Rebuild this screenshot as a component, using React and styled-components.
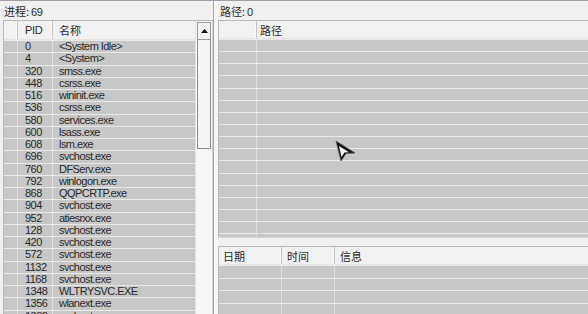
import React from 'react'
import styled, { createGlobalStyle } from 'styled-components'

const processes = [
  ['0', '<System Idle>'],
  ['4', '<System>'],
  ['320', 'smss.exe'],
  ['448', 'csrss.exe'],
  ['516', 'wininit.exe'],
  ['536', 'csrss.exe'],
  ['580', 'services.exe'],
  ['600', 'lsass.exe'],
  ['608', 'lsm.exe'],
  ['696', 'svchost.exe'],
  ['760', 'DFServ.exe'],
  ['792', 'winlogon.exe'],
  ['868', 'QQPCRTP.exe'],
  ['904', 'svchost.exe'],
  ['952', 'atiesrxx.exe'],
  ['128', 'svchost.exe'],
  ['420', 'svchost.exe'],
  ['572', 'svchost.exe'],
  ['1132', 'svchost.exe'],
  ['1168', 'svchost.exe'],
  ['1348', 'WLTRYSVC.EXE'],
  ['1356', 'wlanext.exe'],
  ['1388', 'svchost.exe'],
]

const GlobalStyle = createGlobalStyle`
  html, body {
    margin: 0;
    padding: 0;
    background: #f0f0f0;
  }
  body {
    font-family: "Liberation Sans", "Noto Sans CJK SC", sans-serif;
    font-size: 11px;
    letter-spacing: -0.55px;
    color: #2a2a2a;
  }
`

const Window = styled.div`
  position: relative;
  width: 588px;
  height: 314px;
  overflow: hidden;
  border-top: 1px solid #a4a0a8;
  box-sizing: border-box;
  display: flex;
  background: #f0f0f0;
`

const LeftPane = styled.div`
  width: 210px;
  padding-left: 3px;
  display: flex;
  flex-direction: column;
`

const Splitter = styled.div`
  width: 4px;
  border-left: 1px solid #a8a8a8;
  background: #f6f6f6;
`

const RightPane = styled.div`
  flex: 1;
  display: flex;
  flex-direction: column;
  min-width: 0;
`

const Caption = styled.div`
  height: 19px;
  line-height: 20px;
  padding-left: ${p => p.$indent || 1}px;
  font-family: "Noto Sans CJK SC", "Liberation Sans", sans-serif;
  font-size: 11px;
  letter-spacing: 0;
  white-space: nowrap;
`

const Count = styled.span`
  font-family: "Liberation Sans", sans-serif;
  font-size: 11px;
  letter-spacing: -0.55px;
  margin-left: 2px;
`

const ListFrame = styled.div`
  position: relative;
  border-top: 1px solid #b8b8b8;
  border-left: 1px solid #b8b8b8;
  display: flex;
  overflow: hidden;
  height: ${p => p.$height}px;
  flex: ${p => (p.$height ? 'none' : 1)};
`

const Grid = styled.div`
  flex: 1;
  min-width: 0;
  display: flex;
  flex-direction: column;
`

const HeaderRow = styled.div`
  height: ${p => p.$h || 18}px;
  display: flex;
  background: #f1f1f1;
  border-bottom: 1px solid #e4e4e4;
  flex: none;
`

const HeadCell = styled.div`
  width: ${p => (p.$w ? `${p.$w}px` : 'auto')};
  flex: ${p => (p.$w ? 'none' : 1)};
  padding-left: ${p => p.$pad || 5}px;
  box-sizing: border-box;
  border-right: ${p => (p.$last ? 'none' : '1px solid #c4c4c4')};
  box-shadow: ${p => (p.$last ? 'none' : 'inset -1px 0 0 #fafafa')};
  line-height: ${p => p.$lh || 19}px;
  font-family: "Noto Sans CJK SC", "Liberation Sans", sans-serif;
  font-size: 11px;
  letter-spacing: 0;
  white-space: nowrap;
`

const LatinHead = styled(HeadCell)`
  font-family: "Liberation Sans", sans-serif;
  letter-spacing: -0.3px;
`

const Row = styled.div`
  height: ${p => p.$h}px;
  flex: none;
  display: flex;
  background: #c7c7c7;
  border-top: 1px solid #e9e9e9;
  box-sizing: border-box;
`

const Cell = styled.div`
  width: ${p => (p.$w ? `${p.$w}px` : 'auto')};
  flex: ${p => (p.$w ? 'none' : 1)};
  padding-left: ${p => p.$pad || 0}px;
  box-sizing: border-box;
  border-right: ${p => (p.$last ? 'none' : '1px solid #dedede')};
  line-height: ${p => p.$h - 1}px;
  white-space: nowrap;
  overflow: hidden;
`

const Scrollbar = styled.div`
  width: 16px;
  flex: none;
  background: #f7f7f7;
  border-left: 1px solid #e2e2e2;
  border-right: 1px solid #d0d0d0;
  display: flex;
  flex-direction: column;
`

const ScrollButton = styled.div`
  height: 16px;
  border: 1px solid #9a9a9a;
  background: #f2f2f2;
  display: flex;
  align-items: center;
  justify-content: center;
  margin: 1px 1px 0 1px;
`

const Thumb = styled.div`
  height: 108px;
  margin: 0 1px;
  border: 1px solid #8e8e8e;
  border-top: none;
  background: #f4f4f4;
`

const LowerGap = styled.div`
  height: 8px;
  flex: none;
  border-top: 1px solid #d6d6d6;
`

const Cursor = styled.svg`
  position: absolute;
  left: 334px;
  top: 138px;
`

const emptyRows = n => Array.from({ length: n })

export default function App() {
  return (
    <>
      <GlobalStyle />
      <Window>
        <LeftPane>
          <Caption>
            进程:<Count>69</Count>
          </Caption>
          <ListFrame>
            <Grid>
              <HeaderRow $h={18}>
                <HeadCell $w={14} />
                <LatinHead $w={35} $pad={7}>PID</LatinHead>
                <HeadCell $pad={6} $last>名称</HeadCell>
              </HeaderRow>
              {processes.map(([pid, name]) => (
                <Row key={pid + name} $h={12.25}>
                  <Cell $w={14} $h={12.25} />
                  <Cell $w={35} $pad={7} $h={12.25}>{pid}</Cell>
                  <Cell $pad={6} $h={12.25} $last>{name}</Cell>
                </Row>
              ))}
            </Grid>
            <Scrollbar>
              <ScrollButton>
                <svg width="7" height="4" viewBox="0 0 7 4">
                  <polygon points="3.5,0 7,4 0,4" fill="#111" />
                </svg>
              </ScrollButton>
              <Thumb />
            </Scrollbar>
          </ListFrame>
        </LeftPane>
        <Splitter />
        <RightPane>
          <Caption $indent={2}>
            路径:<Count>0</Count>
          </Caption>
          <ListFrame $height={216}>
            <Grid>
              <HeaderRow $h={17}>
                <HeadCell $w={38} />
                <HeadCell $pad={3} $last>路径</HeadCell>
              </HeaderRow>
              {emptyRows(17).map((_, i) => (
                <Row key={i} $h={12.15}>
                  <Cell $w={38} $h={12.15} />
                  <Cell $h={12.15} $last />
                </Row>
              ))}
            </Grid>
          </ListFrame>
          <LowerGap />
          <ListFrame>
            <Grid>
              <HeaderRow $h={17}>
                <HeadCell $w={63} $pad={4}>日期</HeadCell>
                <HeadCell $w={53} $pad={5}>时间</HeadCell>
                <HeadCell $pad={5} $last>信息</HeadCell>
              </HeaderRow>
              {emptyRows(5).map((_, i) => (
                <Row key={i} $h={12.5}>
                  <Cell $w={63} $h={12.5} />
                  <Cell $w={53} $h={12.5} />
                  <Cell $h={12.5} $last />
                </Row>
              ))}
            </Grid>
          </ListFrame>
        </RightPane>
        <Cursor width="24" height="26" viewBox="0 0 24 26">
          <polygon points="2,2 21,14 12,14.5 7,22" fill="#111" stroke="#555" strokeWidth="0.8" />
          <polygon points="5,7 15,13.2 10.5,13.5 7.5,18" fill="#f4f4f4" />
        </Cursor>
      </Window>
    </>
  )
}
